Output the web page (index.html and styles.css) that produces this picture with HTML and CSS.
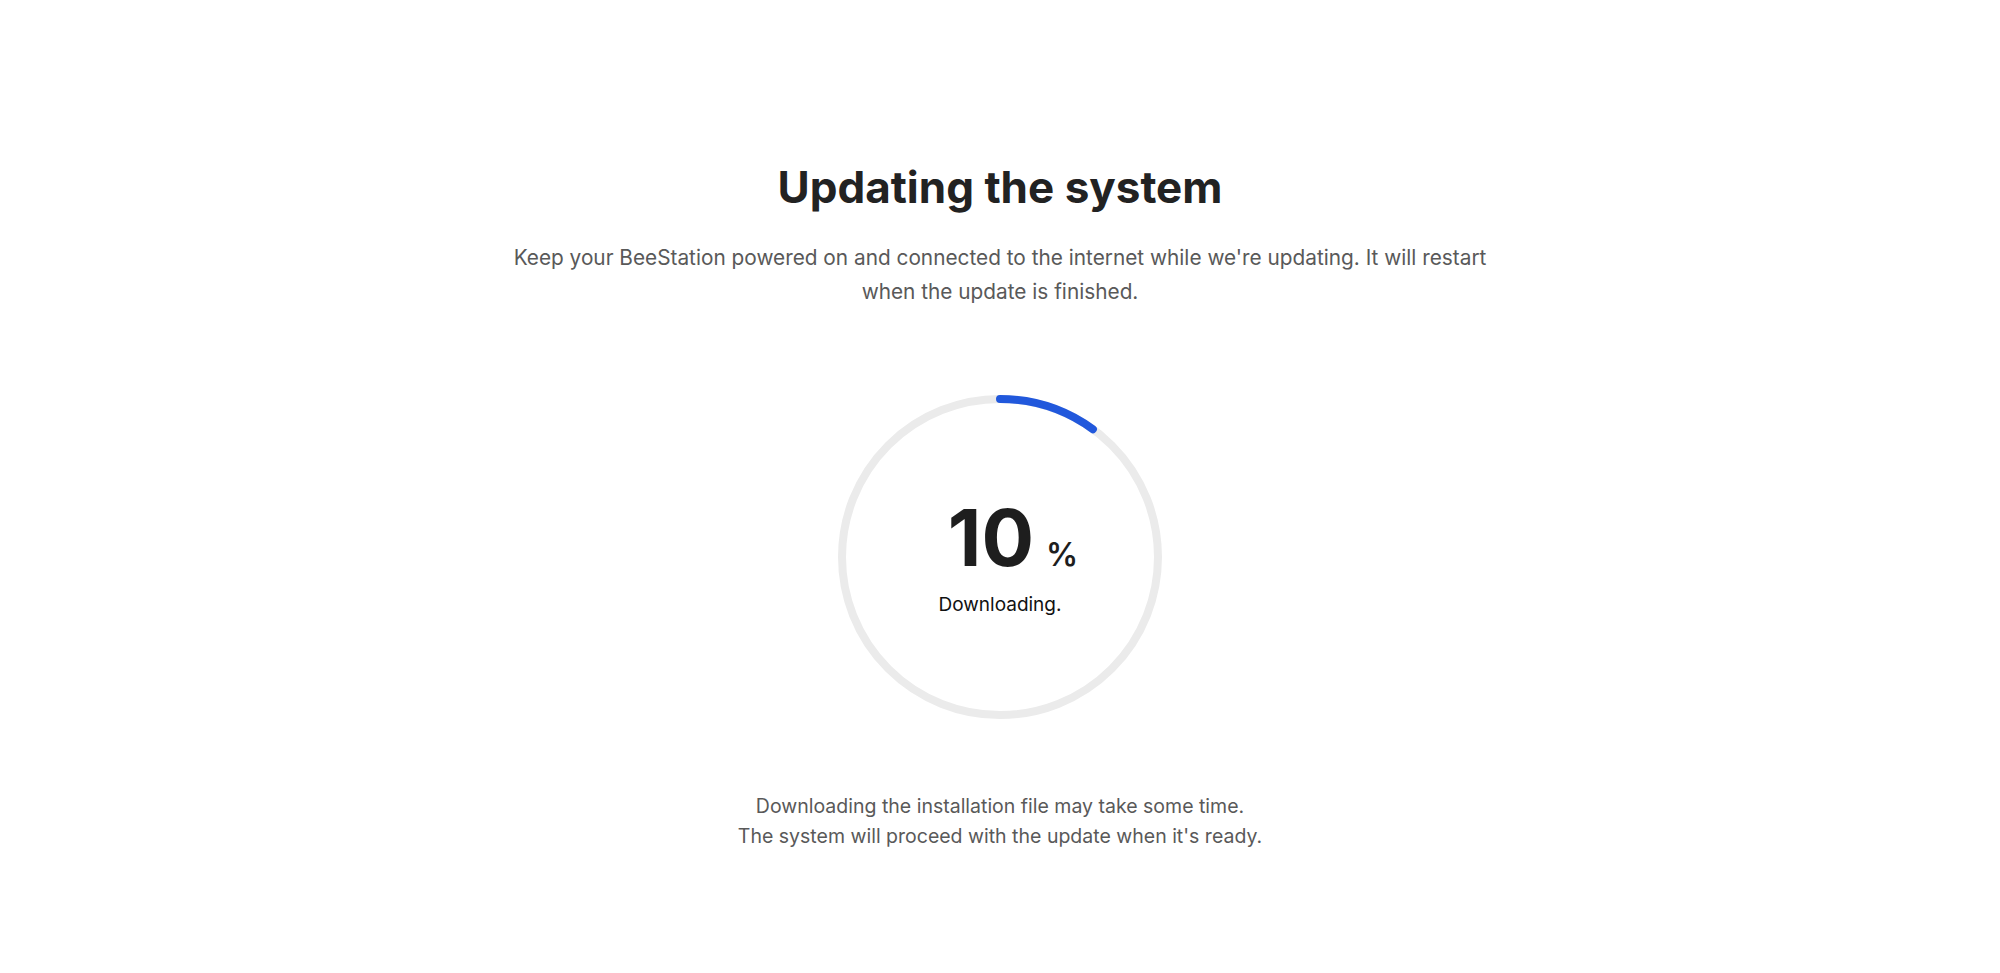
FILE: index.html
```html
<!DOCTYPE html>
<html lang="en">
<head>
    <meta charset="UTF-8">
    <meta name="viewport" content="width=device-width, initial-scale=1.0">
    <title>Updating the system</title>
    <link rel="stylesheet" href="styles.css">
</head>
<body>
    <main class="update">
        <h1 class="update-title">Updating the system</h1>
        <p class="update-desc">Keep your BeeStation powered on and connected to the internet while we're updating. It will restart when the update is finished.</p>

        <!-- Progress ring -->
        <div class="ring">
            <svg class="ring-svg" width="324" height="324" viewBox="0 0 324 324">
                <circle class="ring-track" cx="162" cy="162" r="158"></circle>
                <circle class="ring-bar" cx="162" cy="162" r="158"
                        stroke-dasharray="99.28 992.74" transform="rotate(-90 162 162)"></circle>
            </svg>
            <div class="ring-center">
                <div class="ring-value"><span class="ring-num">10</span><span class="ring-pct">%</span></div>
                <div class="ring-status">Downloading.</div>
            </div>
        </div>

        <p class="update-note">Downloading the installation file may take some time.<br>The system will proceed with the update when it's ready.</p>
    </main>
</body>
</html>
```

FILE: styles.css
```css
body {
    margin: 0;
    background: #fff;
    font-family: Inter, "Noto Sans", sans-serif;
    color: #222;
}
.update {
    display: flex;
    flex-direction: column;
    align-items: center;
    padding-top: 159px;
}
.update-title {
    margin: 0;
    font-size: 44px;
    line-height: 56px;
    font-weight: 700;
    color: #222;
}
.update-desc {
    margin: 26px 0 0;
    max-width: 1010px;
    font-size: 20.8px;
    line-height: 34px;
    text-align: center;
    color: #595959;
}
.ring {
    position: relative;
    width: 324px;
    height: 324px;
    margin-top: 86px;
}
.ring-svg {
    display: block;
}
.ring-track {
    fill: none;
    stroke: #ebebeb;
    stroke-width: 8;
}
.ring-bar {
    fill: none;
    stroke: #2158dc;
    stroke-width: 8;
    stroke-linecap: round;
}
.ring-center {
    position: absolute;
    inset: 0;
    display: flex;
    flex-direction: column;
    align-items: center;
    justify-content: center;
}
.ring-value {
    display: flex;
    align-items: baseline;
    padding-left: 26px;
}
.ring-num {
    font-size: 78px;
    line-height: 80px;
    font-weight: 700;
    color: #1e1e1e;
}
.ring-pct {
    margin-left: 12px;
    font-size: 32px;
    font-weight: 600;
    color: #1e1e1e;
}
.ring-status {
    margin-top: 15px;
    font-size: 19px;
    line-height: 24px;
    color: #111;
}
.update-note {
    margin: 72px 0 0;
    font-size: 19.5px;
    line-height: 30px;
    text-align: center;
    color: #595959;
}
```
